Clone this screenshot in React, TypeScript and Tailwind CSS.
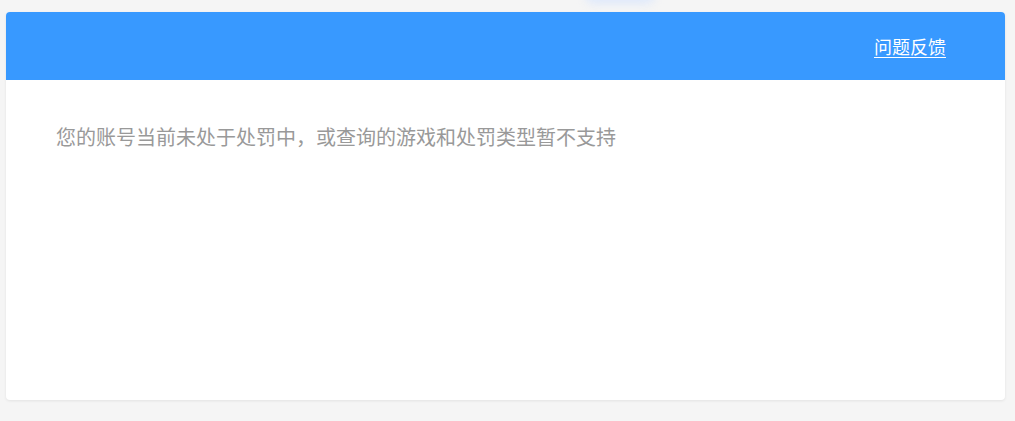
import React from 'react';

export default function App() {
  return (
    <div
      className="relative h-[421px] w-[1015px] overflow-hidden bg-[#f5f5f5] px-[6px] pt-[12px]"
      style={{ fontFamily: '"Microsoft YaHei", "Noto Sans CJK SC", sans-serif' }}
    >
      {/* faint glow of the element above */}
      <div className="absolute left-[585px] top-[-14px] h-[18px] w-[70px] rounded-full bg-[#dfe9fb] blur-[4px]" />

      <div className="relative w-[999px] overflow-hidden rounded-[4px] bg-white shadow-[0_1px_3px_rgba(0,0,0,0.08)]">
        <div className="flex h-[68px] items-center justify-end bg-[#3899ff] pr-[59px]">
          <a href="#" className="text-[18px] leading-none text-white underline underline-offset-[3px]">
            问题反馈
          </a>
        </div>
        <div className="h-[320px] px-[50px] pt-[45px]">
          <p className="text-[20px] leading-[24px] text-[#999999]">
            您的账号当前未处于处罚中，或查询的游戏和处罚类型暂不支持
          </p>
        </div>
      </div>
    </div>
  );
}
